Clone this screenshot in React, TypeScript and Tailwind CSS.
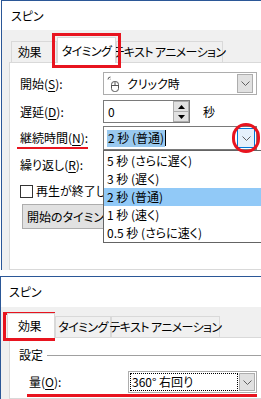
import React from "react"

const base = "font-['Noto_Sans_CJK_JP','Noto_Sans',sans-serif] [font-feature-settings:'palt'] text-[12px] leading-none text-black"

function Chevron() {
    return (
        <svg width="9" height="5" viewBox="0 0 9 5">
            <path d="M0.5 0.5 L4.5 4.5 L8.5 0.5" fill="none" stroke="#606060" strokeWidth="1" />
        </svg>
    )
}

function MouseIcon() {
    return (
        <svg width="13" height="16" viewBox="0 0 13 16">
            <path d="M3.5 1 A2.5 2.5 0 0 0 1 3.5" fill="none" stroke="#555" strokeWidth="1" />
            <path d="M3.5 3 A0.8 0.8 0 0 0 3 3.5" fill="none" stroke="#555" strokeWidth="1" />
            <rect x="4.5" y="5.5" width="7" height="10" rx="3" fill="none" stroke="#555" strokeWidth="1" />
            <path d="M4.5 9.5 H11.5 M8 5.5 V9.5" fill="none" stroke="#555" strokeWidth="1" />
        </svg>
    )
}

function Label({ text, keyChar }: { text: string; keyChar: string }) {
    return (
        <span className="whitespace-nowrap">
            {text}(<span className="underline underline-offset-2">{keyChar}</span>):
        </span>
    )
}

function Tab({ label, active, className }: { label: string; active?: boolean; className?: string }) {
    return (
        <div
            className={[
                "flex items-center whitespace-nowrap border border-b-0 border-[#d9d9d9] tracking-[-0.6px]",
                active ? "relative z-10 -mb-px bg-white" : "",
                className,
            ].join(" ")}
        >
            {label}
        </div>
    )
}

function TopDialog() {
    return (
        <div className="ml-[1px] flex h-[270px] flex-col overflow-hidden border-l border-t border-[#2b5797]">
            <div className="flex h-[29px] shrink-0 items-center bg-white pl-[9px]">スピン</div>
            <div className="flex flex-1 flex-col bg-[#f0f0f0] pt-[7px]">
                <div className="flex items-end pl-[9px]">
                    <Tab label="効果" className="h-[21px] w-[46px] pl-[6px]" />
                    <Tab label="タイミング" active className="h-[26px] w-[59px] justify-center" />
                    <Tab label="テキスト アニメーション" className="h-[21px] w-[107px] justify-center" />
                </div>
                <div className="ml-[7px] flex w-[280px] flex-1 flex-col border border-[#d9d9d9] bg-white pl-[10px] pt-[9px]">
                    <div className="flex h-[23px] items-center">
                        <div className="w-[83px]"><Label text="開始" keyChar="S" /></div>
                        <div className="flex h-[23px] w-[154px] items-center border border-[#adadad] bg-white">
                            <div className="flex flex-1 items-center gap-[7px] pl-[3px]">
                                <MouseIcon />
                                <span>クリック時</span>
                            </div>
                            <div className="mr-[3px] flex h-[19px] w-[16px] items-center justify-center border border-[#adadad] bg-[#e1e1e1]">
                                <Chevron />
                            </div>
                        </div>
                    </div>
                    <div className="mt-[5px] flex h-[23px] items-center">
                        <div className="w-[83px]"><Label text="遅延" keyChar="D" /></div>
                        <div className="flex h-[23px] w-[87px] border border-[#7a7a7a] bg-white">
                            <div className="flex flex-1 items-center pl-[4px]">0</div>
                            <div className="flex w-[16px] flex-col">
                                <div className="flex flex-1 items-center justify-center border border-[#adadad] bg-[#e1e1e1]">
                                    <svg width="7" height="4" viewBox="0 0 7 4"><path d="M0 4 L3.5 0 L7 4 Z" fill="#000" /></svg>
                                </div>
                                <div className="flex flex-1 items-center justify-center border border-t-0 border-[#adadad] bg-[#e1e1e1]">
                                    <svg width="7" height="4" viewBox="0 0 7 4"><path d="M0 0 L3.5 4 L7 0 Z" fill="#000" /></svg>
                                </div>
                            </div>
                        </div>
                        <span className="ml-[13px]">秒</span>
                    </div>
                    <div className="mt-[3px] flex h-[24px] items-center">
                        <div className="w-[83px]"><Label text="継続時間" keyChar="N" /></div>
                        <div className="flex h-[24px] w-[154px] items-center border border-[#7a7a7a] bg-white">
                            <div className="flex flex-1 items-center pl-[3px]">
                                <span className="flex h-[17px] items-center whitespace-pre bg-[#99c9ef] px-[1px]">2 秒 (普通)</span>
                                <span className="h-[16px] w-px bg-black" />
                            </div>
                            <div className="mr-[1px] flex h-[20px] w-[18px] items-center justify-center border border-[#0078d7] bg-[#e5f1fb]">
                                <Chevron />
                            </div>
                        </div>
                    </div>
                    <div className="mt-[3px] flex h-[23px] items-center">
                        <Label text="繰り返し" keyChar="R" />
                    </div>
                    <div className="mt-[8px] flex h-[14px] w-[83px] items-center gap-[3px] overflow-hidden whitespace-nowrap">
                        <span className="h-[13px] w-[13px] shrink-0 border border-[#333] bg-white" />
                        <span>再生が終了し</span>
                    </div>
                    <div className="ml-[2px] mt-[6px] flex h-[25px] w-[81px] items-center overflow-hidden whitespace-nowrap border border-r-0 border-[#adadad] bg-[#e1e1e1] pl-[4px]">
                        開始のタイミング
                    </div>
                </div>
            </div>
        </div>
    )
}

function BottomDialog() {
    return (
        <div className="flex h-[123px] flex-col overflow-hidden border-l border-t border-[#2b5797]">
            <div className="flex h-[30px] shrink-0 items-center bg-white pl-[8px]">スピン</div>
            <div className="flex flex-1 flex-col bg-[#f0f0f0] pt-[6px]">
                <div className="flex items-end pl-[6px]">
                    <Tab label="効果" active className="h-[25px] w-[48px] pl-[10px]" />
                    <Tab label="タイミング" className="h-[21px] w-[56px] justify-center" />
                    <Tab label="テキスト アニメーション" className="h-[21px] w-[109px] justify-center" />
                </div>
                <div className="ml-[8px] flex w-[280px] flex-1 flex-col border border-[#d9d9d9] bg-white pl-[9px] pt-[9px]">
                    <div className="flex h-[16px] items-center gap-[4px]">
                        <span>設定</span>
                        <span className="h-px flex-1 bg-[#a0a0a0]" />
                    </div>
                    <div className="mt-[8px] flex h-[22px] items-center pl-[10px]">
                        <div className="w-[99px]"><Label text="量" keyChar="O" /></div>
                        <div className="flex h-[22px] w-[129px] items-center border border-[#adadad] bg-white px-[1px]">
                            <div className="flex h-[18px] flex-1 items-center border border-dotted border-black pl-[1px]">360° 右回り</div>
                            <div className="ml-[1px] flex h-[18px] w-[16px] items-center justify-center border border-[#adadad] bg-[#e1e1e1]">
                                <Chevron />
                            </div>
                        </div>
                    </div>
                </div>
            </div>
        </div>
    )
}

export default function App() {
    return (
        <div className={["relative h-[399px] w-[261px] overflow-hidden bg-white", base].join(" ")}>
            <TopDialog />
            <div className="h-[6px] bg-white" />
            <BottomDialog />

            {/* dropdown list */}
            <div className="absolute left-[103px] top-[150px] flex w-[160px] flex-col border border-[#646464] bg-white pt-[1px]">
                <div className="flex h-[18px] items-center whitespace-pre pl-[3px]">5 秒 (さらに遅く)</div>
                <div className="flex h-[18px] items-center whitespace-pre pl-[3px]">3 秒 (遅く)</div>
                <div className="flex h-[18px] items-center whitespace-pre bg-[#91c9f7] pl-[3px]">2 秒 (普通)</div>
                <div className="flex h-[18px] items-center whitespace-pre pl-[3px]">1 秒 (速く)</div>
                <div className="flex h-[18px] items-center whitespace-pre pl-[3px]">0.5 秒 (さらに速く)</div>
            </div>

            {/* annotations */}
            <div className="absolute left-[52px] top-[33px] h-[35px] w-[69px] border-[3px] border-[#e8141f]" />
            <div className="absolute left-[232px] top-[123px] h-[30px] w-[28px] rounded-full border-[3px] border-[#e8141f]" />
            <div className="absolute left-[17px] top-[147px] h-[2px] w-[71px] bg-[#e8141f]" />
            <div className="absolute left-[3px] top-[312px] h-[29px] w-[52px] border-[3px] border-[#e8141f]" />
            <div className="absolute left-[27px] top-[394px] h-[3px] w-[230px] bg-[#e8141f]" />
        </div>
    )
}
